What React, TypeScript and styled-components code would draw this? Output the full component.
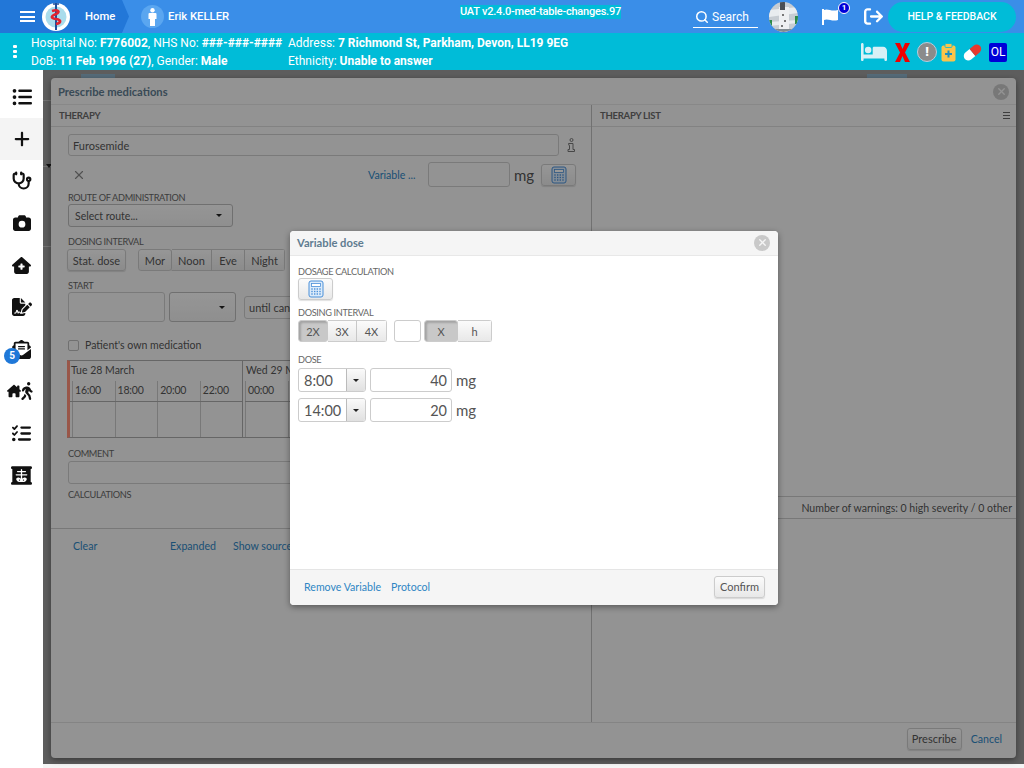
import React from "react";
import styled, { createGlobalStyle } from "styled-components";
import { Search, Stethoscope, X } from "lucide-react";
import {
  FaArrowRightFromBracket,
  FaBed,
  FaCamera,
  FaEnvelopeOpenText,
  FaFileSignature,
  FaHouseChimney,
  FaHouseMedical,
  FaListCheck,
  FaListUl,
  FaPersonWalking,
  FaPlus,
  FaXRay,
} from "react-icons/fa6";

const GlobalStyle = createGlobalStyle`
  html, body {
    margin: 0;
    padding: 0;
    background: #f5f5f5;
    overflow: hidden;
  }
  * {
    box-sizing: border-box;
  }
`;

const Page = styled.div`
  width: 1024px;
  height: 768px;
  display: flex;
  flex-direction: column;
  overflow: hidden;
  font-family: Lato, "Liberation Sans", sans-serif;
`;

const TopBar = styled.header`
  height: 33px;
  flex: none;
  display: flex;
  align-items: center;
  background: #3a8ee8;
  color: #fff;
  font-family: Roboto, sans-serif;
  font-weight: 500;
  font-size: 11.3px;
`;

const HomeCrumb = styled.div`
  width: 129px;
  height: 33px;
  flex: none;
  display: flex;
  align-items: center;
  padding-left: 20px;
  background: #2277d8;
  clip-path: polygon(0 0, 122px 0, 129px 50%, 122px 100%, 0 100%);
`;

const Burger = styled.div`
  width: 15px;
  height: 11px;
  flex: none;
  margin-right: 7px;
  border-top: 2px solid #fff;
  border-bottom: 2px solid #fff;
  position: relative;
  &::after {
    content: "";
    position: absolute;
    left: 0;
    right: 0;
    top: 2.5px;
    height: 2px;
    background: #fff;
  }
`;

const HomeLabel = styled.span`
  margin-left: 15px;
`;

const UserBlock = styled.div`
  width: 331px;
  flex: none;
  display: flex;
  align-items: center;
  gap: 4px;
  padding-left: 12px;
`;

const UserBadge = styled.div`
  width: 23px;
  height: 23px;
  border-radius: 50%;
  background: #5aa6f0;
  display: flex;
  align-items: center;
  justify-content: center;
`;

const VersionWrap = styled.div`
  width: 233px;
  flex: none;
  align-self: flex-start;
  padding-top: 5px;
`;

const Version = styled.span`
  display: inline-block;
  background: #00bcd8;
  line-height: 14px;
  height: 14px;
  font-size: 11px;
  letter-spacing: -0.22px;
`;

const SearchBox = styled.div`
  width: 65px;
  height: 22px;
  flex: none;
  display: flex;
  align-items: center;
  gap: 3px;
  padding-left: 2px;
  border-bottom: 1px solid #fff;
  font-weight: 400;
  font-size: 12px;
  margin-top: 1px;
`;

const AvatarCircle = styled.div`
  width: 29px;
  height: 30px;
  flex: none;
  margin-left: 11px;
  border-radius: 50%;
  overflow: hidden;
`;

const FlagWrap = styled.div`
  width: 34px;
  height: 24px;
  flex: none;
  margin-left: 23px;
  position: relative;
  display: flex;
  align-items: flex-start;
  padding: 3px 0 0 1px;
`;

const FlagCount = styled.span`
  position: absolute;
  left: 17px;
  top: -3px;
  width: 12px;
  height: 12px;
  border-radius: 50%;
  background: #0000d8;
  border: 1px solid #fff;
  font-size: 8px;
  font-weight: 700;
  line-height: 10px;
  text-align: center;
`;

const ExitWrap = styled.div`
  flex: none;
  display: flex;
  margin-left: 9px;
`;

const HelpButton = styled.div`
  width: 128px;
  height: 30px;
  flex: none;
  margin-left: 5px;
  border-radius: 15px;
  background: #00bcd8;
  display: flex;
  align-items: center;
  justify-content: center;
  font-size: 10.5px;
  font-weight: 500;
`;

const PatientBar = styled.div`
  height: 37px;
  flex: none;
  display: flex;
  align-items: center;
  background: #00bcd8;
  color: #fff;
  font-family: Roboto, sans-serif;
  font-size: 12px;
`;

const DotsColumn = styled.div`
  width: 31px;
  flex: none;
  display: flex;
  flex-direction: column;
  align-items: center;
  gap: 2px;
  padding-right: 1px;
`;

const Dot = styled.i`
  width: 4px;
  height: 3px;
  border-radius: 1px;
  background: #fff;
`;

const PatientLines = styled.div<{ $width: number }>`
  width: ${(p) => p.$width}px;
  flex: none;
  display: flex;
  flex-direction: column;
  line-height: 18px;
  white-space: nowrap;
  & b {
    font-weight: 700;
  }
`;

const StatusIcons = styled.div`
  flex: 1;
  display: flex;
  align-items: center;
  justify-content: flex-end;
  gap: 4px;
  padding-right: 17px;
  padding-top: 1px;
`;

const AlertIcons = styled.div`
  display: flex;
  align-items: center;
  gap: 7.5px;
`;

const CareIcons = styled.div`
  display: flex;
  align-items: center;
  gap: 6px;
`;

const WarnCircle = styled.div`
  width: 20px;
  height: 20px;
  border-radius: 50%;
  background: #8b8b8b;
  border: 1px solid #bcd;
  text-align: center;
  font-weight: 900;
  font-size: 13px;
  line-height: 18px;
`;

const OlBadge = styled.div`
  width: 18px;
  height: 19px;
  background: #0000d8;
  border-radius: 2px;
  text-align: center;
  font-size: 12px;
  font-weight: 400;
  line-height: 19px;
`;

const Content = styled.div`
  flex: 1;
  display: flex;
  min-height: 0;
`;

const Sidebar = styled.nav`
  width: 43px;
  flex: none;
  background: #fff;
  padding-top: 6px;
  display: flex;
  flex-direction: column;
`;

const SideItem = styled.div<{ $active?: boolean }>`
  height: 42px;
  flex: none;
  display: flex;
  align-items: center;
  justify-content: center;
  position: relative;
  color: #111;
  background: ${(p) => (p.$active ? "#f4f4f4" : "transparent")};
`;

const SideBadge = styled.span`
  position: absolute;
  left: 4px;
  top: 20px;
  width: 16px;
  height: 16px;
  border-radius: 50%;
  background: #1f78d8;
  color: #fff;
  font-family: Roboto, sans-serif;
  font-size: 10px;
  font-weight: 700;
  line-height: 16px;
  text-align: center;
`;

const WalkPair = styled.div`
  display: flex;
  align-items: center;
  & svg + svg {
    margin-left: -3px;
  }
`;

const MainColumn = styled.div`
  flex: 1;
  display: flex;
  flex-direction: column;
`;

const Stage = styled.main`
  height: 694px;
  flex: none;
  position: relative;
  background: #9c9c9c;
  padding: 8px 8px 6px;
  display: flex;
  flex-direction: column;
`;

const Scrim = styled.div`
  position: absolute;
  inset: 0;
  background: rgba(0, 0, 0, 0.4);
`;

const BehindChip = styled.div<{ $left: number; $w: number }>`
  position: absolute;
  top: 4px;
  left: ${(p) => p.$left}px;
  width: ${(p) => p.$w}px;
  height: 4px;
  background: #8fb4cc;
`;

const GutterLine = styled.div<{ $top: number }>`
  position: absolute;
  left: 0;
  top: ${(p) => p.$top}px;
  width: 8px;
  height: 1px;
  background: #c2c2c2;
`;

const GutterCaret = styled.div`
  position: absolute;
  left: 3px;
  top: 94px;
  border-left: 3px solid transparent;
  border-right: 3px solid transparent;
  border-top: 4px solid #222;
`;

const DialogHeader = styled.div`
  height: 27px;
  flex: none;
  display: flex;
  align-items: center;
  justify-content: space-between;
  padding: 1px 7px 0;
  border-bottom: 1px solid #e3e3e3;
`;

const DialogTitle = styled.h2`
  margin: 0;
  font-size: 11.2px;
  font-weight: 700;
  color: #5f7c90;
`;

const CloseDot = styled.div`
  width: 16px;
  height: 16px;
  flex: none;
  border-radius: 50%;
  background: #c9c9c9;
  color: #f5f5f5;
  display: flex;
  align-items: center;
  justify-content: center;
`;

const DialogBody = styled.div`
  flex: 1;
  display: flex;
  min-height: 0;
`;

const LeftPane = styled.div`
  width: 541px;
  flex: none;
  display: flex;
  flex-direction: column;
  border-right: 1px solid #bdbdbd;
`;

const RightPane = styled.div`
  flex: 1;
  display: flex;
  flex-direction: column;
`;

const PaneHeader = styled.div`
  height: 22px;
  flex: none;
  display: flex;
  align-items: center;
  justify-content: space-between;
  padding: 0 6px 1px 8px;
  border-bottom: 1px solid #d9d9d9;
  font-size: 9.5px;
  letter-spacing: -0.25px;
  font-weight: 700;
  color: #6a6a6a;
`;

const ListIcon = styled.div`
  width: 7px;
  height: 7px;
  border-top: 1px solid #666;
  border-bottom: 1px solid #666;
  position: relative;
  &::after {
    content: "";
    position: absolute;
    left: 0;
    right: 0;
    top: 2px;
    height: 1px;
    background: #666;
  }
`;

const Form = styled.div`
  height: 402px;
  flex: none;
  padding: 7px 8px 0 17px;
  display: flex;
  flex-direction: column;
  border-bottom: 1px solid #c9c9c9;
`;

const Row = styled.div<{ $gap?: number; $mt?: number; $ml?: number; $h?: number }>`
  display: flex;
  align-items: center;
  gap: ${(p) => p.$gap ?? 0}px;
  margin-top: ${(p) => p.$mt ?? 0}px;
  margin-left: ${(p) => p.$ml ?? 0}px;
  height: ${(p) => (p.$h ? `${p.$h}px` : "auto")};
  flex: none;
`;

const FieldLabel = styled.div<{ $mt?: number }>`
  margin-top: ${(p) => p.$mt ?? 0}px;
  font-size: 9.2px;
  letter-spacing: -0.35px;
  line-height: 13px;
  height: 13px;
  color: #666;
  white-space: nowrap;
`;

const TextBox = styled.div<{
  $w?: number;
  $h?: number;
  $right?: boolean;
  $size?: number;
  $ml?: number;
  $mt?: number;
}>`
  width: ${(p) => (p.$w ? `${p.$w}px` : "auto")};
  height: ${(p) => p.$h ?? 24}px;
  flex: ${(p) => (p.$w ? "none" : 1)};
  margin-left: ${(p) => p.$ml ?? 0}px;
  margin-top: ${(p) => p.$mt ?? 0}px;
  background: #fff;
  border: 1px solid #ccc;
  border-radius: 3px;
  padding: 0 4px;
  display: flex;
  align-items: center;
  justify-content: ${(p) => (p.$right ? "flex-end" : "flex-start")};
  color: #555;
  font-size: ${(p) => p.$size ?? 11}px;
  white-space: nowrap;
  overflow: hidden;
`;

const CommentBox = styled(TextBox)`
  flex: none;
`;

const Dialog = styled.section`
  flex: 1;
  position: relative;
  display: flex;
  flex-direction: column;
  background: #f5f5f5;
  border-radius: 4px;
  box-shadow: 0 2px 6px rgba(0, 0, 0, 0.4);
  color: #555;
  font-size: 10.55px;
  min-height: 0;
  ${TextBox} {
    background: #f6f6f6;
  }
`;

const Link = styled.a`
  color: #2f86c4;
  font-size: 10.6px;
  white-space: nowrap;
`;

const VariableLink = styled(Link)`
  width: 48px;
  margin-left: 282px;
`;

const Unit = styled.span`
  font-size: 15px;
  color: #555;
`;

const FixedUnit = styled(Unit)`
  width: 31px;
  padding-left: 4px;
`;

const InfoSlot = styled.div`
  width: 24px;
  flex: none;
  display: flex;
  justify-content: center;
`;

const ClearIcon = styled(X)`
  margin-left: 4px;
  color: #888;
`;

const Btn = styled.div<{ $w: number; $h?: number; $pressed?: boolean; $join?: boolean }>`
  width: ${(p) => p.$w}px;
  height: ${(p) => p.$h ?? 22}px;
  flex: none;
  display: flex;
  align-items: center;
  justify-content: center;
  border: 1px solid #ccc;
  border-left-width: ${(p) => (p.$join ? 0 : 1)}px;
  border-radius: ${(p) => (p.$join ? 0 : 3)}px;
  background: ${(p) =>
    p.$pressed ? "#c8c8c8" : "linear-gradient(#fbfbfb, #e8e8e8)"};
  box-shadow: ${(p) =>
    p.$pressed ? "inset 2px 2px 2px #a5a5a5" : "0 1px 1px rgba(0, 0, 0, 0.12)"};
  color: #555;
  font-size: 11px;
  white-space: nowrap;
`;

const BtnGroup = styled.div<{ $ml?: number }>`
  display: flex;
  flex: none;
  margin-left: ${(p) => p.$ml ?? 0}px;
  border-radius: 3px;
  overflow: hidden;
`;

const SelectBox = styled.div<{ $w: number; $h: number }>`
  width: ${(p) => p.$w}px;
  height: ${(p) => p.$h}px;
  flex: none;
  display: flex;
  align-items: center;
  padding: 0 10px 0 6px;
  border: 1px solid #bbb;
  border-radius: 3px;
  background: linear-gradient(#fafafa, #eee);
  color: #555;
  font-size: 10.5px;
  &::after {
    content: "";
    margin-left: auto;
    border-left: 3px solid transparent;
    border-right: 3px solid transparent;
    border-top: 3px solid #222;
  }
`;

const Checkbox = styled.span`
  width: 11px;
  height: 11px;
  flex: none;
  border: 1px solid #bbb;
  border-radius: 2px;
  background: #f5f5f5;
`;

const Schedule = styled.div`
  height: 78px;
  width: 508px;
  flex: none;
  margin-top: 9px;
  margin-left: -1px;
  display: flex;
  border: 1px solid #aaa;
  border-left: 3px solid #ff8f78;
  overflow: hidden;
`;

const DayColumn = styled.div<{ $w: number; $first?: boolean }>`
  width: ${(p) => p.$w}px;
  flex: none;
  display: flex;
  flex-direction: column;
  border-right: 1px solid #aaa;
  padding-left: ${(p) => (p.$first ? 0 : 2)}px;
`;

const DayTitle = styled.div`
  height: 20px;
  flex: none;
  padding-left: 1px;
  font-size: 10.5px;
  line-height: 18px;
  color: #555;
  white-space: nowrap;
`;

const Hours = styled.div<{ $indent?: number }>`
  display: flex;
  height: 21px;
  flex: none;
  padding-left: ${(p) => p.$indent ?? 0}px;
  border-bottom: 1px solid #aaa;
`;

const Hour = styled.div<{ $w: number }>`
  width: ${(p) => p.$w}px;
  flex: none;
  padding-left: 2px;
  border-left: 1px solid #c9c9c9;
  font-size: 10.5px;
  letter-spacing: -0.2px;
  line-height: 19px;
  color: #555;
`;

const Slots = styled.div<{ $indent?: number }>`
  flex: 1;
  display: flex;
  padding-left: ${(p) => p.$indent ?? 0}px;
`;

const Slot = styled.div<{ $w: number }>`
  width: ${(p) => p.$w}px;
  flex: none;
  border-left: 1px solid #c9c9c9;
`;

const FormFoot = styled.div`
  height: 33px;
  flex: none;
  display: grid;
  grid-template-columns: 97px 63px auto;
  align-items: center;
  padding-left: 22px;
`;

const WarningRow = styled.div`
  height: 23px;
  flex: none;
  margin-top: 369px;
  border-top: 1px solid #c9c9c9;
  border-bottom: 1px solid #c9c9c9;
  display: flex;
  align-items: center;
  justify-content: flex-end;
  padding-right: 4px;
  color: #555;
`;

const DialogFooter = styled.div`
  height: 36px;
  flex: none;
  display: flex;
  align-items: center;
  justify-content: flex-end;
  gap: 9px;
  padding: 0 14px 4px 0;
  border-top: 1px solid #dcdcdc;
`;

const Modal = styled.section`
  position: absolute;
  left: 247px;
  top: 161px;
  width: 488px;
  height: 374px;
  display: flex;
  flex-direction: column;
  background: #fff;
  border-radius: 4px;
  box-shadow: 0 2px 6px rgba(0, 0, 0, 0.4);
  color: #555;
`;

const ModalHeader = styled.div`
  height: 25px;
  flex: none;
  display: flex;
  align-items: center;
  justify-content: space-between;
  padding: 0 8px 1px 7px;
  background: #f5f5f5;
  border-bottom: 1px solid #e8e8e8;
  border-radius: 4px 4px 0 0;
`;

const ModalBody = styled.div`
  flex: 1;
  display: flex;
  flex-direction: column;
  padding: 9px 8px 0;
`;

const ModalFooter = styled.div`
  height: 36px;
  flex: none;
  display: flex;
  align-items: center;
  justify-content: space-between;
  padding: 0 13px 2px 14px;
  background: #f5f5f5;
  border-top: 1px solid #e5e5e5;
  border-radius: 0 0 4px 4px;
`;

const LinkGroup = styled.div`
  display: flex;
  gap: 10px;
`;

const Combo = styled.div`
  width: 68px;
  height: 24px;
  flex: none;
  display: flex;
  border: 1px solid #ccc;
  border-radius: 3px;
  overflow: hidden;
`;

const ComboValue = styled.div`
  flex: 1;
  padding-left: 5px;
  display: flex;
  align-items: center;
  font-size: 14.5px;
  color: #555;
`;

const ComboArrow = styled.div`
  width: 19px;
  flex: none;
  display: flex;
  align-items: center;
  justify-content: center;
  border-left: 1px solid #bbb;
  background: linear-gradient(#fafafa, #e0e0e0);
  &::after {
    content: "";
    border-left: 3px solid transparent;
    border-right: 3px solid transparent;
    border-top: 3px solid #222;
  }
`;

const CalcIcon: React.FC = () => (
  <svg width="18" height="18" viewBox="0 0 16 18" fill="none">
    <rect x="1" y="1" width="14" height="16" rx="2" fill="#dcebfa" stroke="#4a90d9" />
    <rect x="3.5" y="3.5" width="9" height="3" fill="#fff" stroke="#4a90d9" strokeWidth="0.8" />
    {[9, 11.5, 14].map((y) =>
      [4, 6.7, 9.3, 12].map((x) => (
        <rect key={`${x}-${y}`} x={x - 0.7} y={y - 0.7} width="1.4" height="1.4" fill="#4a90d9" />
      ))
    )}
  </svg>
);

const InfoIcon: React.FC = () => (
  <svg width="8" height="14" viewBox="0 0 8 14" fill="none" stroke="#777" strokeWidth="1">
    <circle cx="4.5" cy="2" r="1.5" />
    <path d="M1.5 5.5h4.5v6h1.5v2h-6.5v-2h1.5v-4h-.5z" />
  </svg>
);

const Logo: React.FC = () => (
  <svg width="28" height="29" viewBox="0 0 28 29">
    <circle cx="14" cy="15" r="14" fill="#fff" />
    <circle cx="14" cy="15" r="10.5" fill="#a9dcec" />
    <path d="M14 1v27" stroke="#1d4f9c" strokeWidth="2" />
    <path d="M10 9c6-2 9 1 4 3s-6 4 0 5 5 4 0 5" fill="none" stroke="#e0232e" strokeWidth="2.6" />
    <path d="M11 2h6" stroke="#1d4f9c" strokeWidth="1.5" />
  </svg>
);

const PersonIcon: React.FC = () => (
  <svg width="9" height="18" viewBox="0 0 9 18" fill="#fff">
    <circle cx="4.5" cy="2.2" r="2.2" />
    <path d="M1.5 5h6a1 1 0 0 1 1 1v5H7v7H2v-7H.5V6a1 1 0 0 1 1-1z" />
  </svg>
);

const AvatarArt: React.FC = () => (
  <svg width="29" height="30" viewBox="0 0 29 30">
    <rect width="29" height="30" fill="#c6ccd2" />
    <path d="M0 8l29-3v6L0 15zM0 20l29-2v3L0 24z" fill="#e8ecef" />
    <rect x="10" y="5" width="10" height="25" fill="#eef0f2" />
    <rect x="11" y="0" width="5" height="8" fill="#4a4f55" />
    <rect x="13" y="12" width="2" height="2" fill="#777" />
    <rect x="15" y="18" width="2" height="2" fill="#777" />
    <rect x="12" y="23" width="2" height="2" fill="#777" />
    <rect x="0" y="27" width="29" height="3" fill="#7f8a90" />
    <rect x="0" y="18" width="3" height="8" fill="#2b8a4a" />
    <rect x="26" y="14" width="3" height="8" fill="#2b8a4a" />
  </svg>
);

const FlagIcon: React.FC = () => (
  <svg width="17" height="17" viewBox="0 0 17 17" fill="#fff">
    <path d="M0 1h2v16H0z" />
    <path d="M2 2c4-2 7 2 14 0v10c-6 2-10-2-14 0z" />
  </svg>
);

const RedCross: React.FC = () => (
  <svg width="15" height="19" viewBox="0 0 15 19" fill="#f00000">
    <path d="M0 0h5l2.5 6L10 0h5L10 9.5 15 19h-5l-2.5-6L5 19H0l5-9.5z" />
  </svg>
);

const ClipboardIcon: React.FC = () => (
  <svg width="15" height="19" viewBox="0 0 15 19">
    <rect x="0.5" y="2.5" width="14" height="16" rx="2" fill="#fbc44a" />
    <rect x="4" y="0.5" width="7" height="4" rx="1" fill="#fbc44a" stroke="#00bcd8" strokeWidth="0.8" />
    <path d="M7.5 7.5v7M4 11h7" stroke="#1a8fc4" strokeWidth="2" />
  </svg>
);

const PillIcon: React.FC = () => (
  <svg width="21" height="19" viewBox="0 0 21 19">
    <g transform="rotate(-40 10.5 9.5)">
      <path d="M10.5 5H5a4.5 4.5 0 0 0 0 9h5.5z" fill="#fff" />
      <path d="M10.5 5H16a4.5 4.5 0 0 1 0 9h-5.5z" fill="#e8382e" />
    </g>
  </svg>
);

const hourWidth = 42.6;
const tueHours = ["16:00", "18:00", "20:00", "22:00"];
const wedHours = ["00:00", "02:00", "04:00", "06:00", "08:00", "10:00", "12:00", "14:00"];

export default function App() {
  return (
    <Page>
      <GlobalStyle />
      <TopBar>
        <HomeCrumb>
          <Burger />
          <Logo />
          <HomeLabel>Home</HomeLabel>
        </HomeCrumb>
        <UserBlock>
          <UserBadge>
            <PersonIcon />
          </UserBadge>
          Erik KELLER
        </UserBlock>
        <VersionWrap>
          <Version>UAT v2.4.0-med-table-changes.97</Version>
        </VersionWrap>
        <SearchBox>
          <Search size={14} strokeWidth={2.6} />
          Search
        </SearchBox>
        <AvatarCircle>
          <AvatarArt />
        </AvatarCircle>
        <FlagWrap>
          <FlagIcon />
          <FlagCount>1</FlagCount>
        </FlagWrap>
        <ExitWrap>
          <FaArrowRightFromBracket size={19} />
        </ExitWrap>
        <HelpButton>HELP &amp; FEEDBACK</HelpButton>
      </TopBar>

      <PatientBar>
        <DotsColumn>
          <Dot />
          <Dot />
          <Dot />
        </DotsColumn>
        <PatientLines $width={257}>
          <span>
            Hospital No: <b>F776002</b>, NHS No: <b>###-###-####</b>
          </span>
          <span>
            DoB: <b>11 Feb 1996 (27)</b>, Gender: <b>Male</b>
          </span>
        </PatientLines>
        <PatientLines $width={400}>
          <span>
            Address: <b>7 Richmond St, Parkham, Devon, LL19 9EG</b>
          </span>
          <span>
            Ethnicity: <b>Unable to answer</b>
          </span>
        </PatientLines>
        <StatusIcons>
          <AlertIcons>
            <FaBed size={26} color="#d8f0f6" />
            <RedCross />
            <WarnCircle>!</WarnCircle>
          </AlertIcons>
          <CareIcons>
            <ClipboardIcon />
            <PillIcon />
            <OlBadge>OL</OlBadge>
          </CareIcons>
        </StatusIcons>
      </PatientBar>

      <Content>
        <Sidebar>
          <SideItem>
            <FaListUl size={20} />
          </SideItem>
          <SideItem $active>
            <FaPlus size={18} />
          </SideItem>
          <SideItem>
            <Stethoscope size={20} strokeWidth={2.6} />
          </SideItem>
          <SideItem>
            <FaCamera size={18} />
          </SideItem>
          <SideItem>
            <FaHouseMedical size={19} />
          </SideItem>
          <SideItem>
            <FaFileSignature size={20} />
          </SideItem>
          <SideItem>
            <FaEnvelopeOpenText size={19} />
            <SideBadge>5</SideBadge>
          </SideItem>
          <SideItem>
            <WalkPair>
              <FaHouseChimney size={14} />
              <FaPersonWalking size={18} />
            </WalkPair>
          </SideItem>
          <SideItem>
            <FaListCheck size={19} />
          </SideItem>
          <SideItem>
            <FaXRay size={21} />
          </SideItem>
        </Sidebar>

        <MainColumn>
          <Stage>
            <BehindChip $left={38} $w={34} />
            <BehindChip $left={824} $w={40} />
            <GutterLine $top={30} />
            <GutterLine $top={96} />
            <GutterLine $top={176} />
            <GutterCaret />
            <Dialog>
              <DialogHeader>
                <DialogTitle>Prescribe medications</DialogTitle>
                <CloseDot>
                  <X size={11} strokeWidth={3} />
                </CloseDot>
              </DialogHeader>
              <DialogBody>
                <LeftPane>
                  <PaneHeader>THERAPY</PaneHeader>
                  <Form>
                    <Row>
                      <TextBox $h={22}>Furosemide</TextBox>
                      <InfoSlot>
                        <InfoIcon />
                      </InfoSlot>
                    </Row>
                    <Row $mt={6} $h={25}>
                      <ClearIcon size={14} />
                      <VariableLink>Variable ...</VariableLink>
                      <TextBox $w={82} $h={25} $ml={12} />
                      <FixedUnit>mg</FixedUnit>
                      <Btn $w={35}>
                        <CalcIcon />
                      </Btn>
                    </Row>
                    <FieldLabel $mt={4}>ROUTE OF ADMINISTRATION</FieldLabel>
                    <SelectBox $w={165} $h={23}>Select route...</SelectBox>
                    <FieldLabel $mt={8}>DOSING INTERVAL</FieldLabel>
                    <Row $mt={1} $gap={12} $ml={-1}>
                      <Btn $w={59}>Stat. dose</Btn>
                      <BtnGroup>
                        <Btn $w={34}>Mor</Btn>
                        <Btn $w={40} $join>Noon</Btn>
                        <Btn $w={33} $join>Eve</Btn>
                        <Btn $w={40} $join>Night</Btn>
                      </BtnGroup>
                    </Row>
                    <FieldLabel $mt={8}>START</FieldLabel>
                    <Row $gap={4} $h={30}>
                      <TextBox $w={97} $h={30} />
                      <SelectBox $w={67} $h={30} />
                      <TextBox $w={200} $h={23} $ml={4}>until cancellation</TextBox>
                    </Row>
                    <Row $mt={17} $gap={6}>
                      <Checkbox />
                      <span>Patient's own medication</span>
                    </Row>
                    <Schedule>
                      <DayColumn $w={173} $first>
                        <DayTitle>Tue 28 March</DayTitle>
                        <Hours $indent={2}>
                          {tueHours.map((h) => (
                            <Hour key={h} $w={hourWidth}>{h}</Hour>
                          ))}
                        </Hours>
                        <Slots $indent={2}>
                          {tueHours.map((h) => (
                            <Slot key={h} $w={hourWidth} />
                          ))}
                        </Slots>
                      </DayColumn>
                      <DayColumn $w={338}>
                        <DayTitle>Wed 29 March</DayTitle>
                        <Hours>
                          {wedHours.map((h) => (
                            <Hour key={h} $w={hourWidth}>{h}</Hour>
                          ))}
                        </Hours>
                        <Slots>
                          {wedHours.map((h) => (
                            <Slot key={h} $w={hourWidth} />
                          ))}
                        </Slots>
                      </DayColumn>
                    </Schedule>
                    <FieldLabel $mt={9}>COMMENT</FieldLabel>
                    <CommentBox $h={23} $mt={1} />
                    <FieldLabel $mt={4}>CALCULATIONS</FieldLabel>
                  </Form>
                  <FormFoot>
                    <Link>Clear</Link>
                    <Link>Expanded</Link>
                    <Link>Show source</Link>
                  </FormFoot>
                </LeftPane>
                <RightPane>
                  <PaneHeader>
                    THERAPY LIST
                    <ListIcon />
                  </PaneHeader>
                  <WarningRow>Number of warnings: 0 high severity / 0 other</WarningRow>
                </RightPane>
              </DialogBody>
              <DialogFooter>
                <Btn $w={55}>Prescribe</Btn>
                <Link>Cancel</Link>
              </DialogFooter>
            </Dialog>
            <Scrim />
            <Modal>
              <ModalHeader>
                <DialogTitle>Variable dose</DialogTitle>
                <CloseDot>
                  <X size={11} strokeWidth={3} />
                </CloseDot>
              </ModalHeader>
              <ModalBody>
                <FieldLabel>DOSAGE CALCULATION</FieldLabel>
                <Btn $w={35}>
                  <CalcIcon />
                </Btn>
                <FieldLabel $mt={6}>DOSING INTERVAL</FieldLabel>
                <Row $mt={1}>
                  <BtnGroup>
                    <Btn $w={30} $pressed>2X</Btn>
                    <Btn $w={29} $join>3X</Btn>
                    <Btn $w={30} $join>4X</Btn>
                  </BtnGroup>
                  <TextBox $w={27} $h={22} $ml={7} />
                  <BtnGroup $ml={3}>
                    <Btn $w={34} $pressed>X</Btn>
                    <Btn $w={34} $join>h</Btn>
                  </BtnGroup>
                </Row>
                <FieldLabel $mt={11}>DOSE</FieldLabel>
                <Row $mt={2} $gap={4}>
                  <Combo>
                    <ComboValue>8:00</ComboValue>
                    <ComboArrow />
                  </Combo>
                  <TextBox $w={82} $h={24} $right $size={14.5}>40</TextBox>
                  <Unit>mg</Unit>
                </Row>
                <Row $mt={6} $gap={4}>
                  <Combo>
                    <ComboValue>14:00</ComboValue>
                    <ComboArrow />
                  </Combo>
                  <TextBox $w={82} $h={24} $right $size={14.5}>20</TextBox>
                  <Unit>mg</Unit>
                </Row>
              </ModalBody>
              <ModalFooter>
                <LinkGroup>
                  <Link>Remove Variable</Link>
                  <Link>Protocol</Link>
                </LinkGroup>
                <Btn $w={51}>Confirm</Btn>
              </ModalFooter>
            </Modal>
          </Stage>
        </MainColumn>
      </Content>
    </Page>
  );
}
